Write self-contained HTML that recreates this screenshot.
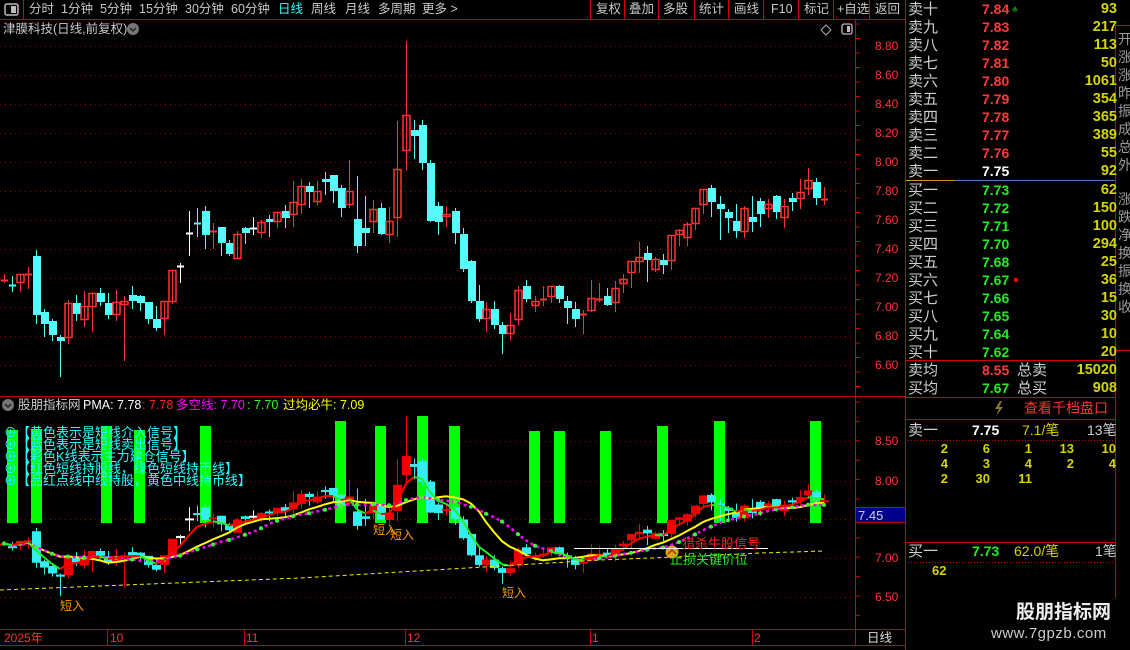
<!DOCTYPE html>
<html><head><meta charset="utf-8">
<style>
*{margin:0;padding:0;box-sizing:border-box}
body{width:1130px;height:650px;background:#000;overflow:hidden;position:relative;font-family:"Liberation Sans","Noto Sans CJK SC",sans-serif;font-size:12px;color:#c8c8c8}
.a{position:absolute;white-space:nowrap;line-height:1}
.tb{top:3px;font-size:12.5px;color:#c8c8c8}
.lab{color:#d0d0d0;font-size:15px}
.pr{font-weight:bold;font-size:14px}
.vol{color:#d4d400;font-weight:bold;font-size:14.5px;text-align:right;width:60px}
.red{color:#ff3a3a}.grn{color:#20ee20}.wht{color:#fff}
</style></head><body>
<svg id="s" width="1130" height="650" style="position:absolute;left:0;top:0">
<line x1="0" y1="19.5" x2="905" y2="19.5" stroke="#c00" />
<line x1="23.5" y1="0" x2="23.5" y2="19" stroke="#c00"/>
<line x1="855.5" y1="19" x2="855.5" y2="645" stroke="#c00"/>
<line x1="905.5" y1="0" x2="905.5" y2="650" stroke="#c00"/>
<line x1="0" y1="396.5" x2="905" y2="396.5" stroke="#c00"/>
<line x1="0" y1="629.5" x2="905" y2="629.5" stroke="#c00"/>
<line x1="0" y1="645.5" x2="905" y2="645.5" stroke="#c00"/>
<line x1="1115.5" y1="25" x2="1115.5" y2="630" stroke="#c00"/>
<line x1="1115" y1="25.5" x2="1130" y2="25.5" stroke="#c00"/>
<line x1="1115" y1="350.5" x2="1130" y2="350.5" stroke="#c00"/>
<g stroke="#c00"><line x1="590.5" y1="0" x2="590.5" y2="19"/><line x1="624.5" y1="0" x2="624.5" y2="19"/><line x1="658.5" y1="0" x2="658.5" y2="19"/><line x1="694.5" y1="0" x2="694.5" y2="19"/><line x1="728.5" y1="0" x2="728.5" y2="19"/><line x1="763.5" y1="0" x2="763.5" y2="19"/><line x1="798.5" y1="0" x2="798.5" y2="19"/><line x1="833.5" y1="0" x2="833.5" y2="19"/><line x1="869.5" y1="0" x2="869.5" y2="19"/>
<line x1="107.5" y1="630" x2="107.5" y2="645"/><line x1="244.5" y1="630" x2="244.5" y2="645"/><line x1="405.5" y1="630" x2="405.5" y2="645"/><line x1="590.5" y1="630" x2="590.5" y2="645"/><line x1="752.5" y1="630" x2="752.5" y2="645"/></g>
<line x1="906" y1="180.5" x2="955" y2="180.5" stroke="#d0902a"/>
<line x1="955" y1="180.5" x2="1115" y2="180.5" stroke="#4a7fc0"/>
<g stroke="#c00"><line x1="906" y1="360.5" x2="1115" y2="360.5"/><line x1="906" y1="397.5" x2="1115" y2="397.5"/><line x1="906" y1="419.5" x2="1115" y2="419.5"/><line x1="906" y1="542.5" x2="1115" y2="542.5"/></g>
<g stroke="#c00" stroke-dasharray="1 2"><line x1="908" y1="440.5" x2="1115" y2="440.5"/><line x1="908" y1="562.5" x2="1115" y2="562.5"/></g>
<rect x="5" y="4" width="13" height="11" rx="2" fill="none" stroke="#bbb" stroke-width="1.5"/><rect x="11" y="6" width="5" height="7" fill="#bbb"/>
<rect x="842" y="24" width="10" height="10" rx="2" fill="none" stroke="#bbb" stroke-width="1.3"/><rect x="847" y="26" width="3" height="6" fill="#bbb"/>
<path d="M826 25 L831 30 L826 35 L821 30 Z" fill="none" stroke="#aaa"/>
<circle cx="133" cy="29" r="6" fill="#777"/><path d="M130 28 L133 31 L136 28" stroke="#222" stroke-width="1.5" fill="none"/>
<circle cx="8" cy="405" r="6" fill="#777"/><path d="M5 404 L8 407 L11 404" stroke="#222" stroke-width="1.5" fill="none"/>
<g id="g"></g>
<rect x="856" y="507" width="49" height="16" fill="#00008c"/>
<line x1="856" y1="507.5" x2="905" y2="507.5" stroke="#c00"/><line x1="856" y1="522.5" x2="905" y2="522.5" stroke="#c00"/>
<text x="858" y="520" fill="#ccc" font-size="13" font-family="Liberation Sans">7.45</text>
<path d="M1000 401 L995 409 L999 409 L996 416 L1003 407 L999 407 L1002 401 Z" fill="#8a7a2a"/>
<circle cx="672" cy="552" r="6.5" fill="#e0a020"/><path d="M668 554 L672 550 L676 554" stroke="#a04000" stroke-width="1.5" fill="none"/>
<line x1="574" y1="548.5" x2="768" y2="548.5" stroke="#fff"/>
</svg>

<div class="a tb" style="left:29px">分时</div>
<div class="a tb" style="left:61px">1分钟</div>
<div class="a tb" style="left:100px">5分钟</div>
<div class="a tb" style="left:139px">15分钟</div>
<div class="a tb" style="left:185px">30分钟</div>
<div class="a tb" style="left:231px">60分钟</div>
<div class="a tb" style="left:278px;color:#3ff">日线</div>
<div class="a tb" style="left:311px">周线</div>
<div class="a tb" style="left:345px">月线</div>
<div class="a tb" style="left:378px">多周期</div>
<div class="a tb" style="left:422px">更多 &gt;</div>
<div class="a tb" style="left:596px">复权</div>
<div class="a tb" style="left:629px">叠加</div>
<div class="a tb" style="left:663px">多股</div>
<div class="a tb" style="left:699px">统计</div>
<div class="a tb" style="left:734px">画线</div>
<div class="a tb" style="left:771px">F10</div>
<div class="a tb" style="left:804px">标记</div>
<div class="a tb" style="left:837px">+自选</div>
<div class="a tb" style="left:875px">返回</div>
<div class="a" style="left:3px;top:23px;font-size:12.5px">津膜科技(日线,前复权)</div>

<div class="a" style="left:18px;top:399px;font-size:12.5px;color:#ccc">股朋指标网</div>
<div class="a" style="left:83px;top:399px;font-size:12.5px;color:#fff">PMA: 7.78</div>
<div class="a" style="left:142px;top:399px;font-size:12.5px;color:#f22">: 7.78</div>
<div class="a" style="left:176px;top:399px;font-size:12.5px;color:#f0f">多空线: 7.70</div>
<div class="a" style="left:247px;top:399px;font-size:12.5px;color:#2f2">: 7.70</div>
<div class="a" style="left:283px;top:399px;font-size:12.5px;color:#ff0">过均必牛: 7.09</div>

<div id="ax"></div>

<div class="a" style="left:4px;top:632px;color:#f33;font-size:12px">2025年</div>
<div class="a" style="left:110px;top:632px;color:#f33">10</div>
<div class="a" style="left:246px;top:632px;color:#f33">11</div>
<div class="a" style="left:407px;top:632px;color:#f33">12</div>
<div class="a" style="left:592px;top:632px;color:#f33">1</div>
<div class="a" style="left:754px;top:632px;color:#f33">2</div>
<div class="a" style="left:867px;top:632px;color:#ddd;font-size:12.5px">日线</div>

<div id="ob"></div>
<div class="a" style="left:1024px;top:401px;color:#f33;font-size:14px">查看千档盘口</div>
<div class="a lab" style="left:908px;top:423px">卖一</div>
<div class="a pr wht" style="left:972px;top:423px">7.75</div>
<div class="a" style="left:1022px;top:423px;color:#d4d400;font-size:14px">7.1/笔</div>
<div class="a" style="left:1087px;top:423px;color:#ccc;font-size:14px">13笔</div>
<div id="dt"></div>
<div class="a lab" style="left:908px;top:544px">买一</div>
<div class="a pr grn" style="left:972px;top:544px">7.73</div>
<div class="a" style="left:1014px;top:544px;color:#d4d400;font-size:14px">62.0/笔</div>
<div class="a" style="left:1095px;top:544px;color:#ccc;font-size:14px">1笔</div>
<div class="a" style="left:932px;top:564px;color:#d4d400;font-weight:bold;font-size:13px">62</div>
<div class="a" style="left:985px;top:598px;width:145px;height:52px;background:#000"></div>
<div class="a" style="left:1016px;top:603px;color:#eee;font-weight:bold;font-size:19px">股朋指标网</div>
<div class="a" style="left:991px;top:626px;color:#ccc;font-size:15px;letter-spacing:0.5px">www.7gpzb.com</div>
<div class="a" style="left:1118px;top:30px;color:#999;font-size:14px;line-height:18px;white-space:normal;width:12px">开涨涨昨振成总外</div>
<div class="a" style="left:1118px;top:190px;color:#999;font-size:14px;line-height:18px;white-space:normal;width:12px">涨跌净换振换收</div>

<div id="tx" style="position:absolute;left:4px;top:427px;color:#2ff;font-size:13px;line-height:12px;white-space:nowrap">
⊕【黄色表示是短线介入信号】<br>⊕【蓝色表示是短线卖出信号】<br>⊕【彩色K线表示主力建仓信号】<br>⊕【红色短线持股线，绿色短线持币线】<br>⊕【品红点线中线持股，黄色中线持币线】</div>
<div class="a" style="left:60px;top:600px;color:#f90;font-size:12px">短入</div>
<div class="a" style="left:373px;top:524px;color:#f90;font-size:12px">短入</div>
<div class="a" style="left:390px;top:529px;color:#f90;font-size:12px">短入</div>
<div class="a" style="left:502px;top:587px;color:#f90;font-size:12px">短入</div>
<div class="a" style="left:682px;top:537px;color:#f22;font-size:13px">猎杀牛股信号</div>
<div class="a" style="left:670px;top:553px;color:#2e2;font-size:13px">止损关键价位</div>

<script>
var D=[[4,'r',279,281,274,283],[12,'c',284,286,276,292],[20,'r',274,283,274,292],[28,'r',273,275,267,289],[36,'c',256,315,250,324],[44,'c',312,324,309,337],[52,'c',321,335,319,341],[60,'c',337,341,335,377],[68,'r',303,338,300,344],[76,'c',303,314,295,321],[84,'r',306,320,291,327],[92,'r',293,307,292,332],[100,'c',293,302,288,306],[108,'c',303,315,293,319],[116,'r',302,315,290,321],[124,'r',301,305,296,361],[132,'c',295,301,286,309],[140,'c',296,303,295,311],[148,'c',302,319,302,324],[156,'c',319,328,306,331],[164,'r',301,319,301,335],[172,'r',270,302,270,304],[180,'w',265,267,263,283],[189,'w',232,234,211,256],[197,'c',222,224,208,237],[205,'c',211,235,206,249],[213,'r',230,232,223,249],[221,'c',227,243,227,256],[229,'c',243,254,240,256],[237,'r',234,259,231,259],[245,'c',228,233,227,244],[253,'w',227,229,217,235],[261,'r',222,233,220,238],[269,'c',219,222,215,237],[277,'r',212,222,212,228],[285,'c',211,218,205,228],[293,'r',202,215,181,227],[301,'r',186,205,179,214],[309,'c',186,192,182,208],[317,'r',191,202,181,205],[325,'c',179,182,172,195],[333,'c',175,191,175,203],[341,'c',188,208,185,217],[349,'r',191,205,160,208],[357,'c',219,246,176,253],[365,'c',228,233,196,246],[373,'r',209,222,200,233],[381,'c',208,234,203,235],[389,'r',221,235,207,243],[397,'r',169,218,121,237],[406,'r',115,151,41,170],[414,'c',130,136,120,159],[422,'c',125,163,120,170],[430,'c',163,221,160,222],[438,'c',206,222,202,235],[446,'r',214,217,206,227],[455,'c',211,233,208,244],[463,'c',234,269,228,272],[471,'c',261,301,260,303],[479,'c',301,319,285,322],[486,'r',309,319,302,332],[494,'c',309,325,301,329],[502,'c',325,334,322,354],[510,'r',325,334,313,340],[518,'r',290,320,286,325],[526,'c',286,299,280,302],[535,'r',301,306,296,312],[543,'r',298,300,286,306],[551,'r',286,297,286,303],[559,'c',286,299,285,303],[567,'c',301,308,296,324],[575,'c',309,319,302,327],[583,'r',313,315,310,334],[591,'r',298,311,280,312],[599,'r',298,300,283,302],[607,'c',296,305,288,306],[615,'r',288,303,281,312],[623,'r',279,284,274,293],[631,'r',261,273,261,288],[639,'r',257,262,242,273],[647,'c',253,260,246,282],[655,'r',259,270,257,272],[663,'c',260,265,254,274],[671,'r',235,261,235,270],[679,'r',230,235,229,246],[687,'r',224,238,222,246],[695,'r',208,224,208,230],[703,'r',189,205,189,214],[711,'c',188,202,185,217],[720,'c',204,209,196,240],[728,'c',212,218,209,233],[736,'c',221,231,204,238],[744,'r',208,232,206,238],[752,'c',217,222,196,232],[760,'c',201,214,198,227],[768,'r',204,209,199,218],[776,'c',196,212,195,219],[784,'r',206,218,199,228],[792,'c',198,202,193,211],[800,'r',192,199,179,209],[808,'r',180,189,168,195],[816,'c',182,198,178,205],[824,'r',198,200,187,205]];
var h='';
function L(x1,y1,x2,y2,c,w,da){return '<line x1="'+x1+'" y1="'+y1+'" x2="'+x2+'" y2="'+y2+'" stroke="'+c+'" stroke-width="'+(w||1)+'"'+(da?' stroke-dasharray="'+da+'"':'')+'/>';}
[46,75,104,133,162,191,220,249,278,307,336,365].forEach(function(y){h+=L(0,y+.5,855,y+.5,'#900',1,'1 4');});
[441,481,519,558,597].forEach(function(y){h+=L(0,y+.5,855,y+.5,'#900',1,'1 4');});
for(var y=24;y<395;y+=14.5)h+=L(856,y,860,y,'#c00');
for(var y=402;y<628;y+=19.4)h+=L(856,y,860,y,'#c00');
[[7,430],[31,430],[101,426],[134,430],[200,426],[335,421],[375,426],[417,416],[449,426],[529,431],[554,431],[600,431],[657,426],[714,421],[810,421]].forEach(function(b){h+='<rect x="'+b[0]+'" y="'+b[1]+'" width="11" height="'+(523-b[1])+'" fill="#0f0"/>';});
var col={r:'#ff3232',c:'#54fcfc',w:'#fff'};
function iy(y){return 481+(y-162)*0.5345;}
var cl=[];
D.forEach(function(d){var x=d[0],c=col[d[1]],t=d[2],b=d[3];
 h+=L(x+.5,d[4],x+.5,d[5],c);
 if(b-t<=2){h+=L(x-3,t+1.5,x+4,t+1.5,c,2);}
 else if(d[1]=='r'){h+='<rect x="'+(x-3)+'" y="'+(t+.5)+'" width="7" height="'+(b-t-1)+'" fill="none" stroke="'+c+'" stroke-width="1.5"/>';}
 else h+='<rect x="'+(x-3)+'" y="'+t+'" width="8" height="'+(b-t)+'" fill="'+c+'"/>';
 var it=iy(t),ib=iy(b),c2=d[1]=='r'?'#e00':(d[1]=='w'?'#fff':'#3ee');
 h+=L(x+.5,iy(d[4]),x+.5,iy(d[5]),c2);
 h+='<rect x="'+(x-4)+'" y="'+it+'" width="9" height="'+Math.max(2,ib-it)+'" fill="'+c2+'"/>';
 cl.push([x,iy(d[1]=='r'?t:b)]);
});
function ma(n){var o=[];for(var i=0;i<cl.length;i++){var s=0,k=0;for(var j=Math.max(0,i-n+1);j<=i;j++){s+=cl[j][1];k++;}o.push([cl[i][0],s/k]);}return o;}
function ema(n){var o=[],v=cl[0][1],a=2/(n+1);cl.forEach(function(p){v=v+a*(p[1]-v);o.push([p[0],v]);});return o;}
function pl(a,c,w,da){return '<polyline points="'+a.map(function(p){return p[0]+','+p[1].toFixed(1)}).join(' ')+'" fill="none" stroke="'+c+'" stroke-width="'+w+'"'+(da?' stroke-dasharray="'+da+'"':'')+'/>';}
var yl=ma(10);h+=pl(yl,'#ff0',2);
var mg=ma(14);h+=pl(mg,'#f0f',2.5,'3 3');mg.forEach(function(p,i){if(i%2==0)h+='<circle cx="'+p[0]+'" cy="'+p[1].toFixed(1)+'" r="2" fill="#3f3"/>';});
var rd=ema(4);for(var i=1;i<rd.length;i++){h+=L(rd[i-1][0],rd[i-1][1],rd[i][0],rd[i][1],rd[i][1]>rd[i-1][1]+0.3?'#2e2':'#f00',2);}
h+=pl([[0,590],[100,586],[200,582],[300,578],[400,572],[500,566],[600,560],[700,556],[760,553],[825,551]],'#ee0',1,'4 3');
document.getElementById('g').innerHTML=h;
var ax='';[['8.80',46],['8.60',75],['8.40',104],['8.20',133],['8.00',162],['7.80',191],['7.60',220],['7.40',249],['7.20',278],['7.00',307],['6.80',336],['6.60',365],['8.50',441],['8.00',481],['7.00',558],['6.50',597]].forEach(function(p){ax+='<div class="a" style="left:875px;top:'+(p[1]-6)+'px;color:#f33;font-size:12px">'+p[0]+'</div>';});
document.getElementById('ax').innerHTML=ax;
var S=[['卖十','7.84',93],['卖九','7.83',217],['卖八','7.82',113],['卖七','7.81',50],['卖六','7.80',1061],['卖五','7.79',354],['卖四','7.78',365],['卖三','7.77',389],['卖二','7.76',55],['卖一','7.75',92],['买一','7.73',62],['买二','7.72',150],['买三','7.71',100],['买四','7.70',294],['买五','7.68',25],['买六','7.67',36],['买七','7.66',15],['买八','7.65',30],['买九','7.64',10],['买十','7.62',20]];
var o='';S.forEach(function(s,i){var y=2+i*18+(i>=10?1:0);var c=i<9?'red':(i==9?'wht':'grn');
o+='<div class="a lab" style="left:908px;top:'+y+'px">'+s[0]+'</div><div class="a pr '+c+'" style="left:982px;top:'+y+'px">'+s[1]+'</div><div class="a vol" style="left:1057px;top:'+y+'px">'+s[2]+'</div>';});
o+='<div class="a" style="left:1012px;top:5px;color:#080;font-size:9px">♣</div><div class="a" style="left:1014px;top:278px;width:4px;height:4px;background:#f00"></div>';
o+='<div class="a lab" style="left:908px;top:363px">卖均</div><div class="a pr red" style="left:982px;top:363px">8.55</div><div class="a lab" style="left:1017px;top:363px">总卖</div><div class="a vol" style="left:1057px;top:363px">15020</div>';
o+='<div class="a lab" style="left:908px;top:381px">买均</div><div class="a pr grn" style="left:982px;top:381px">7.67</div><div class="a lab" style="left:1017px;top:381px">总买</div><div class="a vol" style="left:1057px;top:381px">908</div>';
document.getElementById('ob').innerHTML=o;
var R=[[2,6,1,13,10],[4,3,4,2,4],[2,30,11]],d='';
R.forEach(function(r,i){r.forEach(function(v,j){d+='<div class="a" style="left:'+(898+j*42)+'px;width:50px;text-align:right;top:'+(442+i*15)+'px;color:#d4d400;font-weight:bold;font-size:13px">'+v+'</div>';});});
document.getElementById('dt').innerHTML=d;
</script>
</body></html>
